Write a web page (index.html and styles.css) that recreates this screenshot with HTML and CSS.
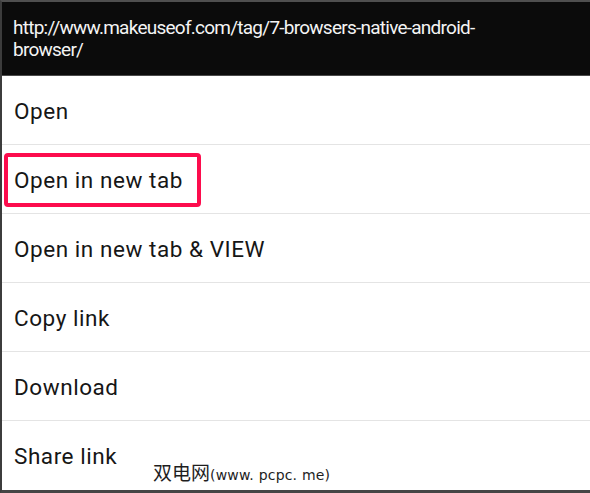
FILE: index.html
```html
<!DOCTYPE html>
<html>
<head>
<meta charset="utf-8">
<link rel="stylesheet" href="styles.css">
</head>
<body>
<div class="dialog">
  <div class="header">http://www.makeuseof.com/tag/7-browsers-native-android-<br>browser/</div>
  <ul class="menu">
    <li class="item">Open</li>
    <li class="item">Open in new tab</li>
    <li class="item">Open in new tab &amp; VIEW</li>
    <li class="item">Copy link</li>
    <li class="item">Download</li>
    <li class="item last">Share link</li>
  </ul>
  <div class="highlight"></div>
  <div class="watermark"><span class="cjk">双电网</span><span class="url">(www. pcpc. me)</span></div>
</div>
</body>
</html>
```
FILE: styles.css
```css
html, body {
  margin: 0;
  padding: 0;
  background: #fff;
}
.dialog {
  position: relative;
  width: 588px;
  height: 488px;
  border-top: 2px solid #4f4f4f;
  border-left: 2px solid #3c3c3c;
  border-bottom: 3px solid #454545;
  display: flex;
  flex-direction: column;
  font-family: Roboto, "Noto Sans", sans-serif;
  overflow: hidden;
}
.header {
  background: #0b0b0b;
  color: #f4f4f4;
  font-size: 19px;
  letter-spacing: -0.75px;
  line-height: 22px;
  padding: 15px 0 14px 11px;
  border-bottom: 1px solid #4a4a4a;
}
.menu {
  list-style: none;
  margin: 0;
  padding: 0;
  flex: 1;
  display: flex;
  flex-direction: column;
}
.item {
  border-bottom: 1px solid #e4e4e4;
  display: flex;
  align-items: center;
  padding-left: 12px;
  padding-top: 1px;
  box-sizing: border-box;
  height: 69px;
  font-size: 22.5px;
  letter-spacing: 0.55px;
  color: #161616;
}
.item.last {
  border-bottom: none;
  flex: 1;
}
.highlight {
  position: absolute;
  left: 2px;
  top: 151px;
  width: 189px;
  height: 46px;
  border: 4px solid #fd0c4d;
  border-radius: 4px;
}
.watermark {
  position: absolute;
  left: 151px;
  top: 456px;
  color: #1e1e1e;
  text-shadow: 0 0 2px #fff, 0 0 1px #fff;
  white-space: nowrap;
  display: flex;
  align-items: baseline;
}
.cjk {
  font-family: "Noto Sans CJK SC", sans-serif;
  font-size: 19px;
}
.url {
  font-family: "DejaVu Sans", sans-serif;
  font-size: 14px;
  letter-spacing: 0.2px;
}
```
